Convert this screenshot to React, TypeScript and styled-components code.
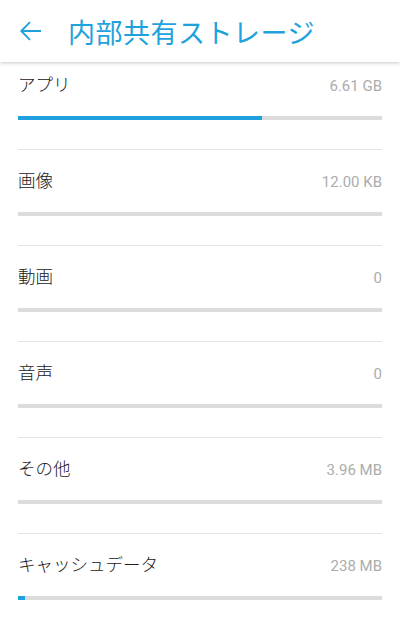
import React from "react";
import styled, { createGlobalStyle } from "styled-components";

const GlobalStyle = createGlobalStyle`
  html, body {
    margin: 0;
    padding: 0;
    background: #ffffff;
    font-family: Roboto, "Noto Sans CJK JP", sans-serif;
  }
`;

const Screen = styled.div`
  width: 400px;
  height: 627px;
  overflow: hidden;
  background: #ffffff;
`;

const Header = styled.header`
  position: relative;
  z-index: 1;
  height: 62px;
  display: flex;
  align-items: center;
  background: #ffffff;
  box-shadow: 0 1px 4px rgba(0, 0, 0, 0.22);
`;

const BackButton = styled.div`
  width: 68px;
  height: 62px;
  display: flex;
  align-items: center;
  padding-left: 19px;
  box-sizing: border-box;
`;

const Title = styled.h1`
  margin: 0;
  font-family: "Noto Sans CJK JP", sans-serif;
  font-weight: 400;
  font-size: 27px;
  letter-spacing: 0.5px;
  color: #1ea1dc;
`;

const List = styled.ul`
  list-style: none;
  margin: -9px 0 0;
  padding: 0;
`;

const Row = styled.li`
  height: 96px;
  box-sizing: border-box;
  margin: 0 18px;
  padding-top: 17px;
  border-top: 1px solid #e4e4e4;
`;

const LabelLine = styled.div`
  display: flex;
  justify-content: space-between;
  align-items: baseline;
  height: 24px;
`;

const Label = styled.span`
  font-family: "Noto Sans CJK JP", sans-serif;
  font-weight: 300;
  font-size: 17.5px;
  color: #202020;
`;

const Value = styled.span`
  font-family: Roboto, sans-serif;
  font-size: 15px;
  color: #acacac;
`;

const Track = styled.div`
  margin-top: 21px;
  height: 4px;
  background: #dcdcdc;
`;

const Fill = styled.div`
  height: 100%;
  background: #1ea1dc;
`;

const items = [
  { label: "アプリ", value: "6.61 GB", pct: 67 },
  { label: "画像", value: "12.00 KB", pct: 0 },
  { label: "動画", value: "0", pct: 0 },
  { label: "音声", value: "0", pct: 0 },
  { label: "その他", value: "3.96 MB", pct: 0 },
  { label: "キャッシュデータ", value: "238 MB", pct: 2 },
];

function App() {
  return (
    <Screen>
      <GlobalStyle />
      <Header>
        <BackButton>
          <svg width="24" height="24" viewBox="0 0 24 24" fill="none">
            <path
              d="M22 12H2.5M11 3.2L2.3 12l8.7 8.8"
              stroke="#1ea1dc"
              strokeWidth="1.9"
            />
          </svg>
        </BackButton>
        <Title>内部共有ストレージ</Title>
      </Header>
      <List>
        {items.map((item) => (
          <Row key={item.label}>
            <LabelLine>
              <Label>{item.label}</Label>
              <Value>{item.value}</Value>
            </LabelLine>
            <Track>
              <Fill style={{ width: `${item.pct}%` }} />
            </Track>
          </Row>
        ))}
      </List>
    </Screen>
  );
}

export default App;
